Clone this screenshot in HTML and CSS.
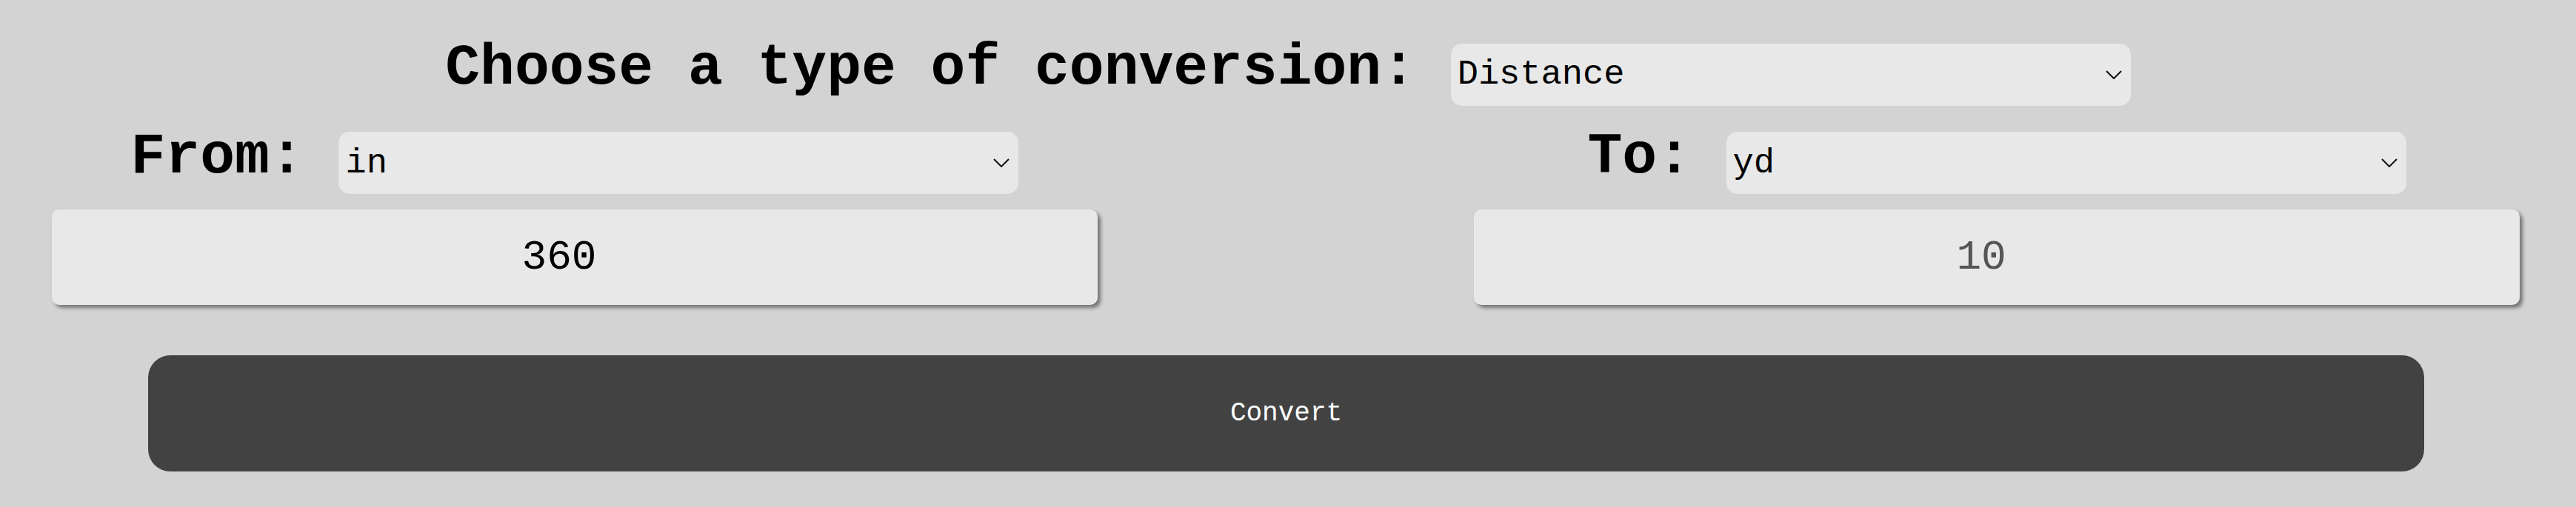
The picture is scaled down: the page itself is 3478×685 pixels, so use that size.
FILE: index.html
```html
<!DOCTYPE html>
<html lang="en">
<head>
<meta charset="utf-8">
<title>Unit Converter</title>
<link rel="stylesheet" href="styles.css">
</head>
<body>
<main class="converter">
  <div class="type-row"><label for="type">Choose a type of conversion: </label><span class="select-wrap"><select id="type" class="picker"><option>Distance</option><option>Weight</option><option>Temperature</option></select><svg class="chev" width="22" height="12" viewBox="0 0 22 12" aria-hidden="true"><path d="M1 1 L11 11 L21 1" fill="none" stroke="#111" stroke-width="2"/></svg></span></div>
  <div class="columns">
    <div class="col">
      <div class="unit-row"><label for="from">From: </label><span class="select-wrap"><select id="from" class="picker"><option>in</option><option>ft</option><option>yd</option></select><svg class="chev" width="22" height="12" viewBox="0 0 22 12" aria-hidden="true"><path d="M1 1 L11 11 L21 1" fill="none" stroke="#111" stroke-width="2"/></svg></span></div>
      <input class="value" type="text" value="360">
    </div>
    <div class="col">
      <div class="unit-row"><label for="to">To: </label><span class="select-wrap"><select id="to" class="picker"><option>yd</option><option>in</option><option>ft</option></select><svg class="chev" width="22" height="12" viewBox="0 0 22 12" aria-hidden="true"><path d="M1 1 L11 11 L21 1" fill="none" stroke="#111" stroke-width="2"/></svg></span></div>
      <input class="value result" type="text" value="10" readonly>
    </div>
  </div>
  <div class="actions"><button class="convert" type="button">Convert</button></div>
</main>
</body>
</html>
```
FILE: styles.css
```css
html, body {
  margin: 0;
  padding: 0;
  background: #d3d3d3;
}

body {
  width: 3478px;
  height: 685px;
  overflow: hidden;
  font-family: "Courier New", Courier, "Nimbus Mono PS", "FreeMono", "Liberation Mono", monospace;
  color: #000;
}

.converter {
  padding-top: 48px;
}

.type-row,
.unit-row {
  font-size: 78px;
  font-weight: bold;
  line-height: normal;
  white-space: pre;
}

.type-row {
  text-align: center;
}

.select-wrap {
  position: relative;
  display: inline-flex;
  vertical-align: baseline;
}

.picker {
  -webkit-appearance: none;
  appearance: none;
  box-sizing: border-box;
  width: 918px;
  height: 84px;
  margin: 0;
  padding: 0 44px 0 9px;
  border: none;
  border-radius: 15px;
  background: #e8e8e8;
  color: #000;
  font-family: inherit;
  font-size: 47px;
  font-weight: normal;
  outline: none;
}

.chev {
  position: absolute;
  right: 12px;
  top: 36px;
  pointer-events: none;
}

.columns {
  display: flex;
  gap: 508px;
  padding-left: 70px;
  margin-top: 25px;
}

.col {
  width: 1412px;
  display: flex;
  flex-direction: column;
}

.unit-row {
  text-align: center;
}

.value {
  box-sizing: border-box;
  width: 100%;
  height: 129px;
  margin: 21px 0 0;
  padding: 0 42px 0 0;
  border: none;
  border-radius: 10px;
  background: #e8e8e8;
  box-shadow: 4px 4px 5px rgba(0, 0, 0, 0.45);
  font-family: inherit;
  font-size: 56px;
  color: #000;
  text-align: center;
  outline: none;
}

.value.result {
  color: #555;
}

.actions {
  padding: 68px 205px 0 200px;
}

.convert {
  display: block;
  width: 100%;
  height: 157px;
  border: none;
  border-radius: 30px;
  background: #424242;
  color: #fff;
  font-family: inherit;
  font-size: 36px;
  cursor: pointer;
}
```
